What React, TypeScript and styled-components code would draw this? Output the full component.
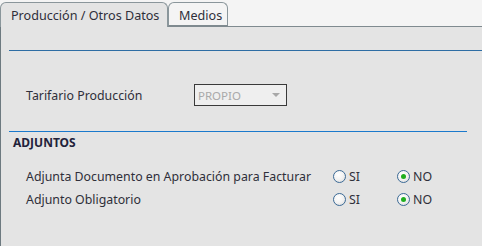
import React from "react";
import styled, { createGlobalStyle } from "styled-components";

const Global = createGlobalStyle`
  html, body { margin: 0; padding: 0; background: #e4e4e4; }
  body { font-family: "Noto Sans", "Open Sans", sans-serif; font-size: 12.35px; color: #2f2f3a; }
  #root { height: 246px; display: flex; flex-direction: column; overflow: hidden; }
`;

const TabBar = styled.div`
  display: flex;
  align-items: flex-end;
  height: 27px;
  padding-top: 3px;
  box-sizing: border-box;
  background: #f4f4f4;
  border-bottom: 1px solid #7f8a8f;
`;

const Tab = styled.div<{ $active?: boolean; $w: number }>`
  box-sizing: border-box;
  width: ${(p) => p.$w}px;
  height: ${(p) => (p.$active ? "25px" : "24px")};
  margin-bottom: ${(p) => (p.$active ? "-1px" : "0")};
  padding: 4px 10px 0 10px;
  background: ${(p) => (p.$active ? "#e4e4e4" : "#f4f4f4")};
  border: 1px solid #8a969b;
  border-bottom: ${(p) => (p.$active ? "none" : "1px solid #7f8a8f")};
  border-radius: 6px 6px 0 0;
  font-size: 12.6px;
  line-height: 18px;
  white-space: nowrap;
  color: #2f2f3a;
`;

const Panel = styled.div`
  flex: 1;
  background: #e4e4e4;
  border-left: 1px solid #6d7a80;
  display: flex;
  flex-direction: column;
`;

const Rule = styled.div<{ $color: string; $right: number; $top: number }>`
  height: 1px;
  margin: ${(p) => p.$top}px ${(p) => p.$right}px 0 8px;
  background: ${(p) => p.$color};
`;

const FieldRow = styled.div`
  display: flex;
  align-items: center;
  margin-top: 33px;
  padding-left: 25px;
  height: 22px;
`;

const FieldLabel = styled.span`
  width: 168px;
`;

const Select = styled.div`
  box-sizing: border-box;
  width: 93px;
  height: 22px;
  border: 1px solid #3a3a3a;
  background: #efefef;
  display: flex;
  align-items: center;
  justify-content: space-between;
  padding: 0 6px 0 3px;
  color: #a9a9a9;
  font-size: 11.5px;
`;

const Arrow = styled.span`
  width: 0;
  height: 0;
  border-left: 4px solid transparent;
  border-right: 4px solid transparent;
  border-top: 4px solid #a8a8a8;
`;

const Heading = styled.div`
  margin: 3px 0 0 12px;
  font-weight: bold;
  font-size: 12px;
  line-height: 16px;
  color: #22223a;
`;

const OptionsGrid = styled.div`
  display: grid;
  grid-template-columns: 307px 64px auto;
  grid-auto-rows: 23px;
  align-items: center;
  padding-left: 25px;
  margin-top: 14px;
`;

const Choice = styled.label`
  display: flex;
  align-items: center;
  gap: 3px;
`;

const Radio = styled.span<{ $checked?: boolean }>`
  box-sizing: border-box;
  width: 13px;
  height: 13px;
  border-radius: 50%;
  border: 1px solid #3b6a96;
  background: radial-gradient(circle at 40% 35%, #ffffff 0%, #f2f2f2 50%, #d4d4d4 100%);
  display: flex;
  align-items: center;
  justify-content: center;
  &::after {
    content: "";
    display: ${(p) => (p.$checked ? "block" : "none")};
    width: 5px;
    height: 5px;
    border-radius: 50%;
    background: #1fae1f;
  }
`;

const rows = [
  { label: "Adjunta Documento en Aprobación para Facturar" },
  { label: "Adjunto Obligatorio" },
];

export default function App() {
  return (
    <>
      <Global />
      <TabBar>
        <Tab $active $w={168}>Producción / Otros Datos</Tab>
        <Tab $w={60}>Medios</Tab>
      </TabBar>
      <Panel>
        <Rule $color="#2e6da4" $right={0} $top={23} />
        <FieldRow>
          <FieldLabel>Tarifario Producción</FieldLabel>
          <Select>
            <span>PROPIO</span>
            <Arrow />
          </Select>
        </FieldRow>
        <Rule $color="#1b79cc" $right={15} $top={25} />
        <Heading>ADJUNTOS</Heading>
        <OptionsGrid>
          {rows.map((r) => (
            <React.Fragment key={r.label}>
              <span>{r.label}</span>
              <Choice>
                <Radio />
                SI
              </Choice>
              <Choice>
                <Radio $checked />
                NO
              </Choice>
            </React.Fragment>
          ))}
        </OptionsGrid>
      </Panel>
    </>
  );
}
